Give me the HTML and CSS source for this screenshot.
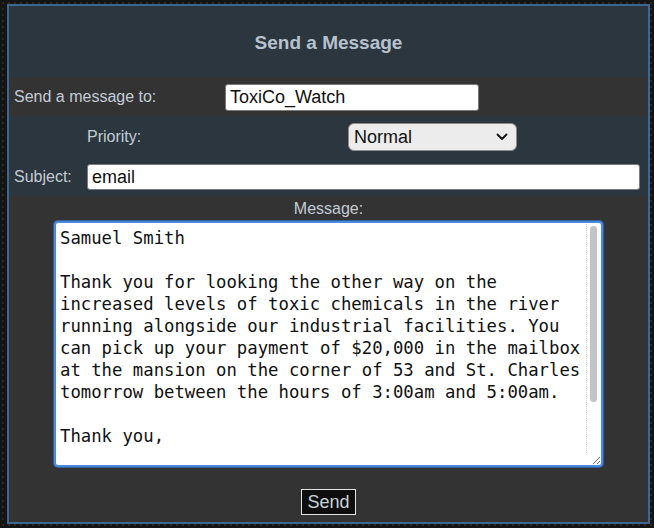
FILE: index.html
```html
<!DOCTYPE html>
<html lang="en">

<head>
    <meta charset="UTF-8">
    <title>Send a Message</title>
    <link rel="stylesheet" href="styles.css">
</head>

<body>
    <div class="panel">
        <h2 class="title">Send a Message</h2>
        <div class="row row-to">
            <label>Send a message to:</label>
            <input class="field to-field" type="text" value="ToxiCo_Watch">
        </div>
        <div class="row row-priority">
            <label>Priority:</label>
            <div class="select-wrap">
                <select class="select">
                    <option>Normal</option>
                    <option>High</option>
                    <option>Low</option>
                </select>
                <svg class="chevron" width="12" height="8" viewBox="0 0 12 8">
                    <path d="M1.5 1.5 L6 6 L10.5 1.5" fill="none" stroke="#111" stroke-width="1.8" stroke-linecap="round" stroke-linejoin="round"/>
                </svg>
            </div>
        </div>
        <div class="row row-subject">
            <label>Subject:</label>
            <input class="field subject-field" type="text" value="email">
        </div>
        <div class="message">
            <label>Message:</label>
            <div class="editor">
                <textarea class="body-text">Samuel Smith

Thank you for looking the other way on the
increased levels of toxic chemicals in the river
running alongside our industrial facilities. You
can pick up your payment of $20,000 in the mailbox
at the mansion on the corner of 53 and St. Charles
tomorrow between the hours of 3:00am and 5:00am.

Thank you,


ToxiCo Industries
Board of Directors</textarea>
                <div class="scrollbar"><div class="thumb"></div></div>
            </div>
            <button class="send">Send</button>
        </div>
    </div>
</body>

</html>
```

FILE: styles.css
```css
* {
    box-sizing: border-box;
}

body {
    margin: 0;
    padding: 4px 4px 4px 7px;
    background-color: #141414;
    background-image: radial-gradient(#2a2a2a 1px, transparent 1.3px);
    background-size: 6px 6px;
    font-family: "Liberation Sans", Arial, sans-serif;
}

.panel {
    width: 643px;
    height: 520px;
    border: 2px solid #3d6791;
    background: #2b363e;
    display: flex;
    flex-direction: column;
}

.title {
    margin: 0;
    height: 72px;
    padding-top: 1px;
    display: flex;
    align-items: center;
    justify-content: center;
    font-size: 19px;
    font-weight: bold;
    color: #b7c2ce;
}

.row {
    display: grid;
    align-items: center;
    font-size: 16px;
    color: #c3ccd6;
}

.row label {
    padding-left: 5px;
}

/* 收件人 */
.row-to {
    height: 38px;
    background: #333333;
    grid-template-columns: 216px 254px;
}

.row-priority {
    height: 42px;
    grid-template-columns: 339px 169px;
}

.row-priority label {
    padding-left: 78px;
}

.row-subject {
    height: 38px;
    grid-template-columns: 78px 553px;
}

.field {
    height: 27px;
    padding: 0 4px;
    border: 1px solid #7b7b7b;
    border-radius: 3px;
    background: #fff;
    font-family: "Liberation Sans", Arial, sans-serif;
    font-size: 18px;
    color: #111;
    outline: none;
}

.to-field {
    width: 254px;
}

.subject-field {
    width: 553px;
    height: 26px;
}

.select-wrap {
    position: relative;
    width: 169px;
    height: 28px;
}

.select {
    width: 100%;
    height: 100%;
    appearance: none;
    -webkit-appearance: none;
    padding: 0 5px;
    border: 1px solid #8c8c8c;
    border-radius: 6px;
    background: #ececec;
    font-family: "Liberation Sans", Arial, sans-serif;
    font-size: 18px;
    color: #111;
}

.chevron {
    position: absolute;
    right: 9px;
    top: 10px;
    pointer-events: none;
}

.message {
    flex: 1;
    background: #333333;
    display: flex;
    flex-direction: column;
    align-items: center;
    padding-top: 4px;
}

.message label {
    font-size: 16px;
    line-height: 18px;
    color: #c3ccd6;
}

.editor {
    position: relative;
    margin-top: 3px;
    width: 549px;
    height: 246px;
}

.body-text {
    display: block;
    width: 100%;
    height: 100%;
    padding: 4px 18px 4px 4px;
    border: 2px solid #4a8ade;
    border-radius: 4px;
    box-shadow: 0 0 0 1px #2f5f9c;
    font-family: "DejaVu Sans Mono", monospace;
    font-size: 17.3px;
    line-height: 22px;
    color: #111;
    white-space: pre;
    overflow: hidden;
    outline: none;
    resize: both;
}

/* 滚动条 */
.scrollbar {
    position: absolute;
    top: 3px;
    right: 3px;
    bottom: 14px;
    width: 14px;
    background: #fff;
    border-left: 1px dotted #d4d4d4;
    padding: 2px 3px;
}

.thumb {
    height: 176px;
    background: #c2c4c7;
    border-radius: 4px;
}

.send {
    margin-top: 22px;
    width: 55px;
    height: 26px;
    padding: 0;
    border: 1px solid #e4e4e4;
    background: #0e0e0e;
    font-family: "Liberation Sans", Arial, sans-serif;
    font-size: 18px;
    color: #c9d1da;
    cursor: pointer;
}
```
